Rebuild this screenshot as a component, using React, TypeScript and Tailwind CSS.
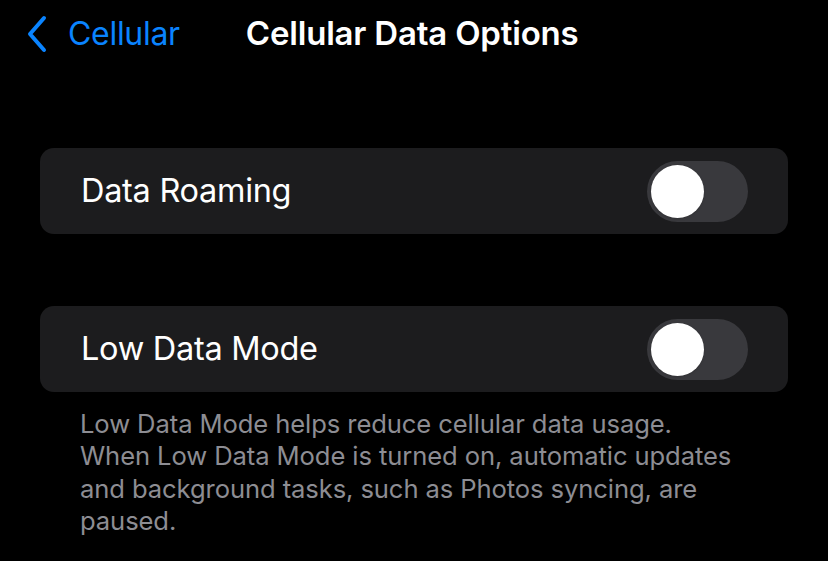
export default function App() {
  return (
    <div className="w-[828px] h-[561px] bg-black overflow-hidden" style={{ fontFamily: "Inter, 'Noto Sans', sans-serif" }}>
      <div className="relative h-[68px] flex items-center">
        <div className="flex items-center pl-[26px] gap-[20px] text-[#0a84ff]">
          <svg width="22" height="38" viewBox="0 0 22 38" fill="none">
            <path d="M18 3 L4 19 L18 35" stroke="#0a84ff" strokeWidth="4" strokeLinecap="round" strokeLinejoin="round" />
          </svg>
          <span className="text-[32px] tracking-[-0.3px]">Cellular</span>
        </div>
        <div className="ml-[66px] text-white text-[33px] font-semibold tracking-[-0.2px]">Cellular Data Options</div>
      </div>

      <div className="px-[40px] pt-[80px]">
        <Row label="Data Roaming" />
        <div className="h-[72px]" />
        <Row label="Low Data Mode" />
        <p className="pl-[40px] pr-[40px] pt-[16px] text-[#8d8d93] text-[25.6px] leading-[32.3px] tracking-[-0.1px]">
          Low Data Mode helps reduce cellular data usage.
          <br />
          When Low Data Mode is turned on, automatic updates and background tasks, such as Photos syncing, are paused.
        </p>
      </div>
    </div>
  );
}

function Row({ label }: { label: string }) {
  return (
    <div className="h-[86px] rounded-[14px] bg-[#1c1c1e] flex items-center justify-between pl-[41px] pr-[40px]">
      <span className="text-white text-[32.5px] tracking-[-0.3px]">{label}</span>
      <div className="w-[101px] h-[61px] rounded-full bg-[#39393d] flex items-center pl-[4px]">
        <div className="w-[53px] h-[53px] rounded-full bg-white shadow" />
      </div>
    </div>
  );
}
